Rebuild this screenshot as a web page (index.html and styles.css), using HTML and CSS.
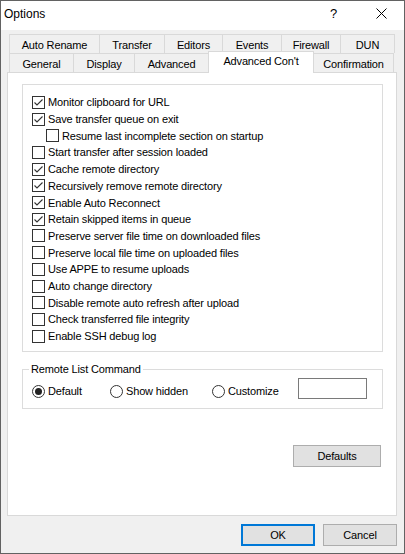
FILE: index.html
```html
<!DOCTYPE html>
<html lang="en">
<head>
  <meta charset="UTF-8" />
  <title>Options</title>
  <link rel="stylesheet" href="styles.css">
</head>
<body>
  <div class="window">
    <div class="titlebar">
      <span class="title">Options</span>
      <span class="help">?</span>
      <span class="close">
        <svg width="11" height="11" viewBox="0 0 11 11"><path d="M0.5 0.5 L10.5 10.5 M10.5 0.5 L0.5 10.5" stroke="#000" stroke-width="1" fill="none"/></svg>
      </span>
    </div>

    <div class="content">
      <!-- Tabs -->
      <div class="tabs">
        <div class="tab-row back">
          <div class="tab t-rename">Auto Rename</div>
          <div class="tab t-transfer">Transfer</div>
          <div class="tab t-editors">Editors</div>
          <div class="tab t-events">Events</div>
          <div class="tab t-firewall">Firewall</div>
          <div class="tab t-dun last">DUN</div>
        </div>
        <div class="tab-row front">
          <div class="tab t-general">General</div>
          <div class="tab t-display">Display</div>
          <div class="tab t-advanced">Advanced</div>
          <div class="tab t-cont active">Advanced Con't</div>
          <div class="tab t-confirm last">Confirmation</div>
        </div>
      </div>

      <div class="panel">
        <div class="group options-group">
          <div class="check-row checked"><span class="box"></span>Monitor clipboard for URL</div>
          <div class="check-row checked"><span class="box"></span>Save transfer queue on exit</div>
          <div class="check-row indent"><span class="box"></span>Resume last incomplete section on startup</div>
          <div class="check-row"><span class="box"></span>Start transfer after session loaded</div>
          <div class="check-row checked"><span class="box"></span>Cache remote directory</div>
          <div class="check-row checked"><span class="box"></span>Recursively remove remote directory</div>
          <div class="check-row checked"><span class="box"></span>Enable Auto Reconnect</div>
          <div class="check-row checked"><span class="box"></span>Retain skipped items in queue</div>
          <div class="check-row"><span class="box"></span>Preserve server file time on downloaded files</div>
          <div class="check-row"><span class="box"></span>Preserve local file time on uploaded files</div>
          <div class="check-row"><span class="box"></span>Use APPE to resume uploads</div>
          <div class="check-row"><span class="box"></span>Auto change directory</div>
          <div class="check-row"><span class="box"></span>Disable remote auto refresh after upload</div>
          <div class="check-row"><span class="box"></span>Check transferred file integrity</div>
          <div class="check-row"><span class="box"></span>Enable SSH debug log</div>
        </div>

        <div class="group list-group">
          <span class="legend">Remote List Command</span>
          <div class="radios">
            <div class="radio r-default selected"><span class="circle"></span>Default</div>
            <div class="radio r-hidden"><span class="circle"></span>Show hidden</div>
            <div class="radio r-custom"><span class="circle"></span>Customize</div>
            <div class="textbox"></div>
          </div>
        </div>

        <div class="panel-actions">
          <button class="btn btn-defaults">Defaults</button>
        </div>
      </div>

      <div class="dialog-actions">
        <button class="btn btn-ok">OK</button>
        <button class="btn">Cancel</button>
      </div>
    </div>
  </div>
</body>
</html>
```

FILE: styles.css
```css
body {
  margin: 0;
  font-family: 'Liberation Sans', Arial, sans-serif;
  font-size: 11px;
  letter-spacing: -0.15px;
  color: #000;
}

.window {
  width: 405px;
  height: 554px;
  box-sizing: border-box;
  border: 1px solid #626262;
  background: #f0f0f0;
  display: flex;
  flex-direction: column;
}

/* Title bar */
.titlebar {
  height: 29px;
  background: #fff;
  display: flex;
  align-items: center;
  flex-shrink: 0;
}

.title {
  flex: 1;
  padding-left: 3px;
  font-size: 12px;
  letter-spacing: 0;
  margin-top: -4px;
}

.help {
  width: 12px;
  font-size: 13px;
  margin-top: -4px;
  margin-right: 34px;
}

.close {
  width: 11px;
  height: 11px;
  margin-top: -4px;
  margin-right: 17px;
  display: flex;
}

/* Content */
.content {
  padding: 4px 7px 0 6px;
}

.tabs {
  margin-left: 2px;
}

.tab-row {
  display: flex;
  height: 19px;
}

.tab {
  box-sizing: border-box;
  height: 19px;
  border-top: 1px solid #d9d9d9;
  border-left: 1px solid #d9d9d9;
  background: #f0f0f0;
  text-align: center;
  line-height: 20px;
  white-space: nowrap;
}

.tab.last {
  border-right: 1px solid #d9d9d9;
}

.t-rename { width: 90px; }
.t-transfer { width: 65px; }
.t-editors { width: 58px; }
.t-events { width: 59px; }
.t-firewall { width: 59px; }
.t-dun { width: 55px; }

.t-general { width: 64px; }
.t-display { width: 61px; }
.t-advanced { width: 74px; }
.t-cont { width: 106px; }
.t-confirm { width: 80px; border-left: none; }

.tab.active {
  background: #fff;
  height: 22px;
  margin-top: -2px;
  border-right: 1px solid #d9d9d9;
  line-height: 19px;
  position: relative;
  z-index: 1;
}

.panel {
  box-sizing: border-box;
  width: 390px;
  height: 444px;
  background: #fff;
  border: 1px solid #d9d9d9;
  padding: 11px 0 0 14px;
}

.group {
  box-sizing: border-box;
  width: 361px;
  border: 1px solid #dcdcdc;
}

.options-group {
  height: 268px;
  padding: 9px 0 0 9px;
}

.check-row {
  height: 16.71px;
  display: flex;
  align-items: center;
  white-space: nowrap;
}

.check-row.indent {
  padding-left: 14px;
}

.box {
  width: 13px;
  height: 13px;
  box-sizing: border-box;
  border: 1px solid #333;
  background: #fff;
  margin-right: 3px;
  flex-shrink: 0;
}

.checked .box {
  background: #fff url("data:image/svg+xml,%3Csvg xmlns='http://www.w3.org/2000/svg' width='11' height='11'%3E%3Cpath d='M1.5 5.5 L4 8 L9.5 2.5' stroke='%23333' stroke-width='1.1' fill='none'/%3E%3C/svg%3E") no-repeat center;
}

.list-group {
  margin-top: 17px;
  height: 40px;
}

.legend {
  display: inline-block;
  margin: -8px 0 0 6px;
  padding: 0 2px;
  background: #fff;
  line-height: 14px;
  vertical-align: top;
}

.radios {
  display: flex;
  align-items: center;
  padding-left: 9px;
  margin-top: -4px;
}

.radio {
  display: flex;
  align-items: center;
  white-space: nowrap;
  margin-top: 5px;
}

.r-default { width: 78px; }
.r-hidden { width: 102px; }
.r-custom { width: 86px; }

.circle {
  width: 13px;
  height: 13px;
  box-sizing: border-box;
  border: 1px solid #333;
  border-radius: 50%;
  background: #fff;
  margin-right: 3px;
  display: flex;
  align-items: center;
  justify-content: center;
}

.selected .circle::after {
  content: "";
  width: 7px;
  height: 7px;
  border-radius: 50%;
  background: #222;
}

.textbox {
  width: 69px;
  height: 21px;
  box-sizing: border-box;
  border: 1px solid #7a7a7a;
  background: #fff;
}

.panel-actions {
  display: flex;
  justify-content: flex-end;
  margin-top: 36px;
  width: 359px;
}

.btn {
  font-family: 'Liberation Sans', Arial, sans-serif;
  font-size: 11px;
  letter-spacing: -0.15px;
  color: #000;
  height: 22px;
  box-sizing: border-box;
  background: #e1e1e1;
  border: 1px solid #adadad;
  padding: 0;
}

.btn-defaults {
  width: 88px;
}

.dialog-actions {
  display: flex;
  justify-content: flex-end;
  gap: 8px;
  margin-top: 8px;
}

.dialog-actions .btn {
  width: 74px;
}

.btn-ok {
  border: 2px solid #0078d7;
}
```
